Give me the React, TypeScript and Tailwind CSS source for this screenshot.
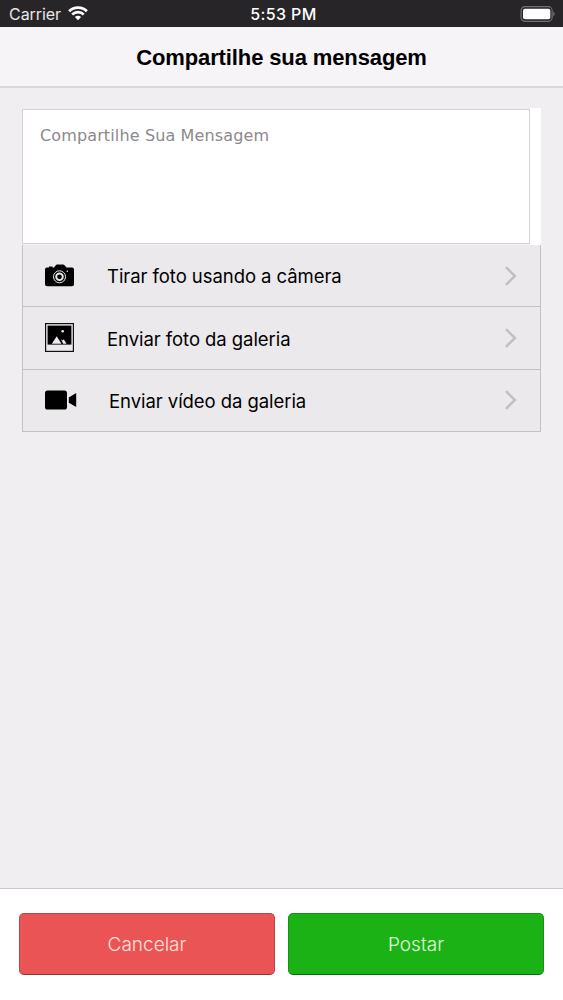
import type { ReactNode } from 'react'

interface ShareOption {
  id: string
  label: string
  icon: ReactNode
  labelClass: string
}

function WifiIcon() {
  return (
    <svg width="20" height="15" viewBox="0 0 20 15" fill="none" stroke="#fff" strokeWidth="2.7">
      <path d="M1.1 5.2C6 .3 14 .3 18.9 5.2" />
      <path d="M4.2 8.5C7.5 5.4 12.5 5.4 15.8 8.5" />
      <path d="M6.9 11.1C8.7 9.4 11.3 9.4 13.1 11.1L10 14.2Z" fill="#fff" stroke="none" />
    </svg>
  )
}

function BatteryIcon() {
  return (
    <svg width="35" height="16" viewBox="0 0 35 16">
      <rect x="1.1" y=".7" width="31" height="14.6" rx="3.8" fill="none" stroke="#737175" strokeWidth="1.2" />
      <rect x="3" y="2.7" width="27.3" height="10.6" rx="2" fill="#fff" />
      <path d="M33.3 5.5c1.8.9 1.8 4.1 0 5Z" fill="#737175" />
    </svg>
  )
}

function CameraIcon() {
  return (
    <svg width="29" height="23" viewBox="0 0 29 23">
      <path
        d="M2 3.5H4V2.4H7.5V3.5H9L11.2.8Q11.7.4 12.5.4H18Q18.8.4 19.3.9L21.5 3.5H27Q29 3.5 29 5.5V20.2Q29 22.3 27 22.3H2Q0 22.3 0 20.2V5.5Q0 3.5 2 3.5Z"
        fill="#000"
      />
      <circle cx="14.5" cy="12.8" r="6" fill="none" stroke="#ebe9ec" strokeWidth="1" />
      <circle cx="14.5" cy="12.8" r="3.3" fill="none" stroke="#ebe9ec" strokeWidth="1.9" />
      <circle cx="22.3" cy="7.3" r=".8" fill="#ebe9ec" />
    </svg>
  )
}

function PictureIcon() {
  return (
    <svg width="29" height="29" viewBox="0 0 29 29">
      <rect x=".6" y=".6" width="27.8" height="27.8" fill="#ebe9ec" stroke="#111" strokeWidth="1.2" />
      <rect x="2.6" y="2.6" width="23.8" height="19" fill="#000" />
      <path d="M6.8 20.8 11.7 13.2 16.5 20.8ZM16 16.2 17.6 17.6 18.7 16.3 21.6 20.8H18.2Z" fill="#ebe9ec" />
      <circle cx="17.7" cy="8.3" r="1.3" fill="#ebe9ec" />
    </svg>
  )
}

function VideoIcon() {
  return (
    <svg width="32" height="20" viewBox="0 0 32 20" fill="#000">
      <rect x="0" y=".5" width="22" height="19" rx="2.6" />
      <path d="M23.8 7.5 31.2 3V17L23.8 12.8Z" />
    </svg>
  )
}

function Chevron() {
  return (
    <svg width="13" height="20" viewBox="0 0 13 20" fill="none" stroke="#c1bfc2" strokeWidth="2.5">
      <path d="M2 1.2 10.9 10 2 18.8" />
    </svg>
  )
}

const options: ShareOption[] = [
  { id: 'camera', label: 'Tirar foto usando a câmera', icon: <CameraIcon />, labelClass: 'pt-[2px]' },
  { id: 'photo', label: 'Enviar foto da galeria', icon: <PictureIcon />, labelClass: 'pt-[3px]' },
  { id: 'video', label: 'Enviar vídeo da galeria', icon: <VideoIcon />, labelClass: 'pt-1 pl-0.5' },
]

export default function App() {
  return (
    <div className="flex h-[1000px] w-[563px] flex-col bg-[#f0eef1] font-['Inter',sans-serif] text-black">
      <div className="grid h-[27px] shrink-0 grid-cols-3 items-center bg-[#272528] pr-2 pl-[9px] text-white">
        <div className="flex items-center gap-[7px]">
          <span className="pt-px text-[16px] tracking-[-0.05px] text-[#e8e7e8]">Carrier</span>
          <WifiIcon />
        </div>
        <span className="pt-px pl-[3px] text-center text-[16px] font-medium tracking-[0.4px]">5:53 PM</span>
        <div className="flex justify-end">
          <BatteryIcon />
        </div>
      </div>

      <header className="flex h-[61px] shrink-0 items-center justify-center border-b-2 border-[#dad8db] bg-[#f6f4f7]">
        <h1 className="pt-px font-['Liberation_Sans',sans-serif] text-[22px] font-bold tracking-[-0.12px]">
          Compartilhe sua mensagem
        </h1>
      </header>

      <main className="flex-1 px-[22px] pt-5">
        <div className="flex h-[137px]">
          <textarea
            className="mt-px block h-[135px] w-[508px] resize-none border border-[#d5d3d6] bg-white px-[17px] pt-3.5 font-['DejaVu_Sans',sans-serif] text-[16px] tracking-[0.13px] outline-none placeholder:text-[#8b898c]"
            placeholder="Compartilhe Sua Mensagem"
          />
          <div className="flex-1 bg-white" />
        </div>
        <ul className="border-x border-[#c3c1c4] bg-[#ebe9ec]">
          {options.map((option) => (
            <li key={option.id} className="flex h-[62.3px] items-center border-b-[1.5px] border-[#c3c1c4] pr-[23px] pl-[22px]">
              <span className="w-[62px]">{option.icon}</span>
              <span className={`flex-1 text-[18.5px] tracking-[-0.06px] ${option.labelClass}`}>{option.label}</span>
              <Chevron />
            </li>
          ))}
        </ul>
      </main>

      <footer className="flex h-[112px] shrink-0 gap-[13px] border-t border-[#cac8cb] bg-white px-[19px] pt-6">
        <button className="h-[62px] flex-1 rounded-[5px] border border-[#b94449] border-b-[#8e383c] bg-[#ea5455] pt-0.5 text-[19px] font-light text-[#fde4dc]">
          Cancelar
        </button>
        <button className="h-[62px] flex-1 rounded-[5px] border border-[#16911a] border-b-[#0c6b10] bg-[#1bb216] pt-0.5 text-[19px] font-light text-[#e0fadb]">
          Postar
        </button>
      </footer>
    </div>
  )
}
